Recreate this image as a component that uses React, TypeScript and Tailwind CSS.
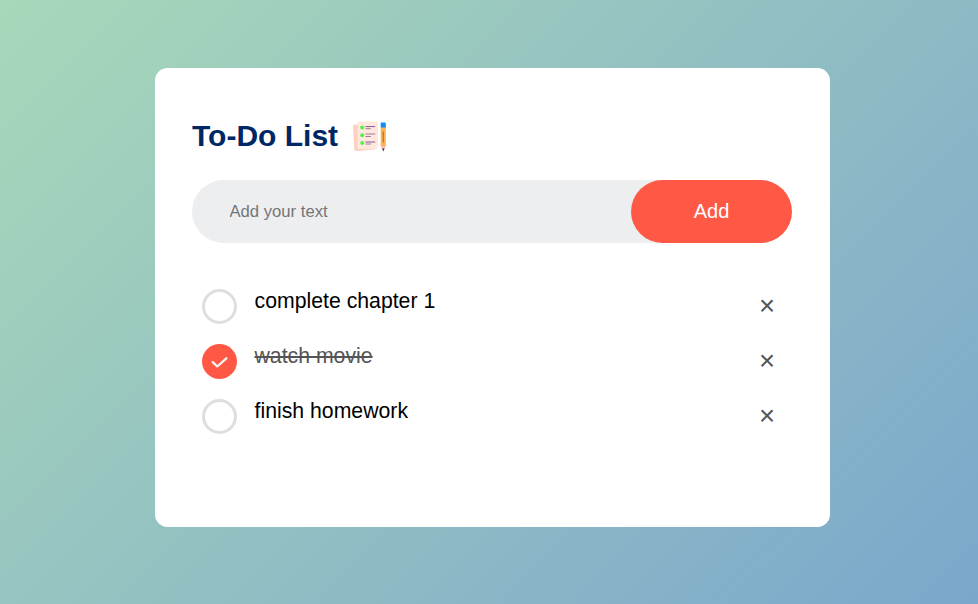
import { useState } from 'react';

type Task = { id: number; text: string; done: boolean };

const initialTasks: Task[] = [
  { id: 1, text: 'complete chapter 1', done: false },
  { id: 2, text: 'watch movie', done: true },
  { id: 3, text: 'finish homework', done: false },
];

function NotesIcon() {
  return (
    <svg className="mt-[3px] ml-[13px] size-[38px] shrink-0" viewBox="0 0 38 38" aria-hidden="true">
      <path d="M1.9 7.1 16 5l2 26-12.5 1.9a2 2 0 0 1-2.2-1.8Z" fill="#ffcfc2" />
      <path d="M3.3 31.1 3 28l21-1.5v5L5.5 32.9a2 2 0 0 1-2.2-1.8Z" fill="#ffcfc2" />
      <path d="M8.2 3.4h17.4a1.4 1.4 0 0 1 1.4 1.4v23.8l-1.6 2.4H8.2a1.7 1.7 0 0 1-1.7-1.7V5.1a1.7 1.7 0 0 1 1.7-1.7Z" fill="#ffe8dc" />
      <g fill="#52f34a">
        <circle cx="11.2" cy="9.6" r="2" />
        <circle cx="11.2" cy="17.3" r="2" />
        <circle cx="11.2" cy="25" r="2" />
      </g>
      <g strokeWidth="1">
        <path d="M14.5 8.6h9.7M14.5 24h9.7" stroke="#88589a" />
        <path d="M14.5 16h9.7M14.5 10.7h5.4M14.5 18.5h5.4M14.5 26h5.4" stroke="#a77998" />
      </g>
      <path d="M29.7 9h5.1v19h-5.1Z" fill="#ffb34f" />
      <path d="M29.7 5.4a.9.9 0 0 1 .9-.9h3.3a.9.9 0 0 1 .9.9v4.1h-5.1Z" fill="#128bf2" />
      <path d="M31.7 13.5h1.1v11h-1.1Z" fill="#a66e3c" />
      <path d="M29.7 28h5.1l-1.3 3.1h-2.4Z" fill="#ffb9b4" />
      <path d="M31 30.6h2.6l-1.3 2.8Z" fill="#443b43" />
    </svg>
  );
}

function Marker({ done }: { done: boolean }) {
  if (!done) {
    return <span className="size-[35px] shrink-0 rounded-full border-[3px] border-[#dedede]" />;
  }
  return (
    <span className="flex size-[35px] shrink-0 rounded-full bg-[#ff5945]">
      <svg className="size-[35px]" viewBox="0 0 35 35" fill="none">
        <path d="m10.8 18.1 4.4 4.4 9.1-8.2" stroke="#fff4f2" strokeWidth="2.3" strokeLinecap="round" strokeLinejoin="round" />
      </svg>
    </span>
  );
}

export default function App() {
  const [tasks, setTasks] = useState(initialTasks);
  const [text, setText] = useState('');

  const add = () => {
    if (!text.trim()) return;
    setTasks([...tasks, { id: Date.now(), text, done: false }]);
    setText('');
  };
  const toggle = (id: number) =>
    setTasks(tasks.map((t) => (t.id === id ? { ...t, done: !t.done } : t)));
  const remove = (id: number) => setTasks(tasks.filter((t) => t.id !== id));

  return (
    <div className="min-h-screen bg-[linear-gradient(135deg,#a8d8b9,#7ba7cc)] pt-[68px] font-['Liberation_Sans',Arial,sans-serif]">
      <main className="ml-[155px] h-[459px] w-[675px] rounded-[12.5px] bg-white pr-[38px] pl-[37px] pt-[49px]">
        <h2 className="mb-[25px] flex h-[38px] items-center pb-[2px] text-[30px] font-bold text-[#002765]">
          To-Do List
          <NotesIcon />
        </h2>
        <div className="mb-[31px] flex h-[63px] items-center rounded-full bg-[#edeef0] pl-[25px]">
          <input
            className="min-w-0 flex-1 bg-transparent px-[12.5px] pt-[13.5px] pb-[11.5px] text-[16.67px] outline-none placeholder:text-[#757575]"
            placeholder="Add your text"
            value={text}
            onChange={(e) => setText(e.target.value)}
          />
          <button onClick={add} className="h-[63px] w-[161px] rounded-full bg-[#ff5945] pb-[2px] text-[20px] text-white">
            Add
          </button>
        </div>
        <ul>
          {tasks.map((t) => (
            <li key={t.id} className="flex h-[55px] items-start pl-2.5 text-[21.25px] leading-[25px]">
              <button onClick={() => toggle(t.id)} className="flex flex-1 items-start pt-[15px] text-left">
                <Marker done={t.done} />
                <span className={t.done ? 'ml-[17.5px] text-[#555] line-through' : 'ml-[17.5px] text-black'}>
                  {t.text}
                </span>
              </button>
              <button
                onClick={() => remove(t.id)}
                className="mt-[7px] size-[50px] text-center text-[27.5px] leading-[50px] text-[#555]"
              >
                ×
              </button>
            </li>
          ))}
        </ul>
      </main>
    </div>
  );
}
